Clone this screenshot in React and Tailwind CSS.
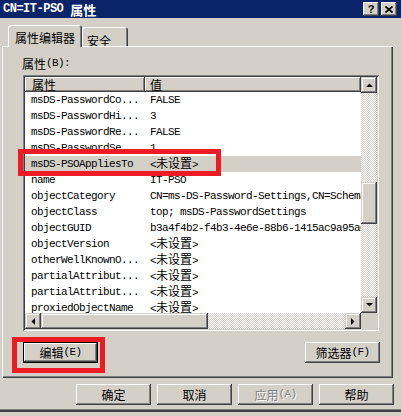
import React from 'react';

const mono = "font-['Liberation_Mono',monospace] text-[11px] tracking-[-0.6px]";
const cjk = "font-['Noto_Sans_CJK_SC',sans-serif] text-[12px] tracking-normal";
const raised =
  'bg-[#d4d0c8] shadow-[inset_-1px_-1px_#404040,inset_1px_1px_#d4d0c8,inset_-2px_-2px_#808080,inset_2px_2px_#ffffff]';
const pushBtn =
  'bg-[#d4d0c8] shadow-[inset_-1px_-1px_#404040,inset_1px_1px_#ffffff,inset_-2px_-2px_#808080,inset_2px_2px_#d4d0c8]';
const checker =
  'bg-[repeating-conic-gradient(#ffffff_0%_25%,#d4d0c8_0%_50%)] bg-[length:2px_2px]';

const rows = [
  ['msDS-PasswordCo...', 'FALSE'],
  ['msDS-PasswordHi...', '3'],
  ['msDS-PasswordRe...', 'FALSE'],
  ['msDS-PasswordSe...', '1'],
  ['msDS-PSOAppliesTo', '<未设置>', true],
  ['name', 'IT-PSO'],
  ['objectCategory', 'CN=ms-DS-Password-Settings,CN=Schema,CN=Configuration'],
  ['objectClass', 'top; msDS-PasswordSettings'],
  ['objectGUID', 'b3a4f4b2-f4b3-4e6e-88b6-1415ac9a95a0'],
  ['objectVersion', '<未设置>'],
  ['otherWellKnownO...', '<未设置>'],
  ['partialAttribut...', '<未设置>'],
  ['partialAttribut...', '<未设置>'],
  ['proxiedObjectName', '<未设置>'],
];

const Mixed = ({ text }) =>
  text.split(/([\u4e00-\u9fff]+)/).map((part, i) =>
    /[\u4e00-\u9fff]/.test(part) ? (
      <span key={i} className={cjk}>{part}</span>
    ) : (
      <span key={i}>{part}</span>
    )
  );

const Arrow = ({ dir }) => {
  const pts = {
    up: '0,4 7,4 3.5,0.5',
    down: '0,0 7,0 3.5,3.5',
    left: '4,0 4,7 0.5,3.5',
    right: '0,0 0,7 3.5,3.5',
  }[dir];
  const vertical = dir === 'up' || dir === 'down';
  return (
    <svg width={vertical ? 7 : 4} height={vertical ? 4 : 7} viewBox={vertical ? '0 0 7 4' : '0 0 4 7'}>
      <polygon points={pts} fill="#000" />
    </svg>
  );
};

const ScrollBtn = ({ dir }) => (
  <div className={`w-[16px] h-[16px] shrink-0 flex items-center justify-center ${raised}`}>
    <Arrow dir={dir} />
  </div>
);

const Button = ({ label, disabled, focused }) => (
  <div
    className={`w-[75px] h-[21px] flex items-center justify-center leading-none ${mono} ${pushBtn} ${
      focused ? 'border border-black' : ''
    } ${disabled ? 'text-[#808080] [text-shadow:1px_1px_#ffffff]' : 'text-black'}`}
  >
    <Mixed text={label} />
  </div>
);

export default function App() {
  return (
    <div className="relative w-[401px] h-[416px] overflow-hidden bg-[#d4d0c8] text-black flex flex-col">
      {/* title bar */}
      <div className="h-[18px] shrink-0 bg-[#0a246a] flex items-center justify-between pl-[3px] pr-[4px]">
        <div className="text-white font-bold leading-none flex items-center">
          <span className="font-['Liberation_Mono',monospace] text-[12px] tracking-[-0.5px] mr-[7px]">CN=IT-PSO</span>
          <span className="font-['Noto_Sans_CJK_SC',sans-serif] text-[13px]">属性</span>
        </div>
        <div className="flex gap-[2px]">
          <div className={`w-[16px] h-[14px] flex items-center justify-center ${pushBtn}`}>
            <span className="font-['Liberation_Sans',sans-serif] font-bold text-[11px] leading-none">?</span>
          </div>
          <div className={`w-[16px] h-[14px] flex items-center justify-center ${pushBtn}`}>
            <svg width="8" height="7" viewBox="0 0 8 7">
              <path d="M0.5 0.5 L7.5 6.5 M7.5 0.5 L0.5 6.5" stroke="#000" strokeWidth="1.7" />
            </svg>
          </div>
        </div>
      </div>

      {/* tabs */}
      <div className="h-[28px] shrink-0 flex items-end pl-[8px]">
        <div className="relative z-10 -mb-[1px] h-[22px] w-[74px] bg-[#d4d0c8] rounded-t-[3px] shadow-[inset_1px_1px_#ffffff,inset_-1px_0_#404040,inset_-2px_0_#808080] pl-[7px] pt-[4px] leading-none">
          <span className={cjk}>属性编辑器</span>
        </div>
        <div className="h-[19px] w-[46px] rounded-t-[3px] shadow-[inset_1px_1px_#ffffff,inset_-1px_0_#404040,inset_-2px_0_#808080] pl-[5px] pt-[5px] leading-none">
          <span className={cjk}>安全</span>
        </div>
      </div>

      {/* tab panel */}
      <div className="ml-[2px] w-[391px] h-[332px] shrink-0 flex flex-col pt-[11px] shadow-[inset_1px_1px_#ffffff,inset_-1px_-1px_#404040,inset_-2px_-2px_#808080]">
        <div className={`pl-[20px] h-[13px] leading-[13px] flex items-center ${mono}`}>
          <Mixed text="属性(B):" />
        </div>

        <div className="mt-[5px] ml-[21px] w-[356px] h-[256px] p-[2px] flex bg-white shadow-[inset_1px_1px_#808080,inset_-1px_-1px_#ffffff,inset_2px_2px_#404040,inset_-2px_-2px_#d4d0c8]">
          <div className="flex-1 flex flex-col min-w-0">
            <div className="h-[15px] shrink-0 flex bg-[#d4d0c8] leading-none">
              <div className="w-[120px] pl-[7px] flex items-center shadow-[inset_-1px_-1px_#404040,inset_1px_1px_#ffffff,inset_-2px_-2px_#808080]">
                <span className={cjk}>属性</span>
              </div>
              <div className="flex-1 pl-[5px] flex items-center shadow-[inset_-1px_-1px_#404040,inset_1px_1px_#ffffff,inset_-2px_-2px_#808080]">
                <span className={cjk}>值</span>
              </div>
            </div>
            <div className={`flex-1 overflow-hidden bg-white ${mono}`}>
              {rows.map(([name, value, sel], i) => (
                <div
                  key={i}
                  className={`h-[16px] flex items-center whitespace-nowrap overflow-hidden leading-[16px] ${
                    sel ? 'bg-[#d4d0c8]' : ''
                  }`}
                >
                  <div className="w-[120px] shrink-0 pl-[6px]">{name}</div>
                  <div className="pl-[5px]">
                    <Mixed text={value} />
                  </div>
                </div>
              ))}
            </div>
            <div className="h-[16px] shrink-0 flex">
              <ScrollBtn dir="left" />
              <div className={`w-[167px] h-[16px] ${raised}`} />
              <div className={`flex-1 ${checker}`} />
              <ScrollBtn dir="right" />
            </div>
          </div>
          <div className="w-[16px] shrink-0 flex flex-col">
            <ScrollBtn dir="up" />
            <div className={`h-[89px] ${checker}`} />
            <div className={`h-[42px] ${raised}`} />
            <div className={`flex-1 ${checker}`} />
            <ScrollBtn dir="down" />
            <div className="h-[16px] bg-[#d4d0c8]" />
          </div>
        </div>

        <div className="mt-[11px] flex justify-between pl-[21px] pr-[13px]">
          <Button label="编辑(E)" focused />
          <Button label="筛选器(F)" />
        </div>
      </div>

      {/* dialog buttons */}
      <div className="mt-[6px] flex justify-end gap-[6px] pr-[7px]">
        <Button label="确定" />
        <Button label="取消" />
        <Button label="应用(A)" disabled />
        <Button label="帮助" />
      </div>

      <div className="mt-[4px] h-[1px] bg-[#808080]" />
      <div className="h-[2px] bg-[#404040]" />

      {/* red annotation boxes */}
      <div className="absolute left-[18px] top-[149px] w-[203px] h-[27px] border-[5px] border-[#ed1c24]" />
      <div className="absolute left-[12px] top-[337px] w-[93px] h-[36px] border-[5px] border-[#ed1c24]" />
    </div>
  );
}
